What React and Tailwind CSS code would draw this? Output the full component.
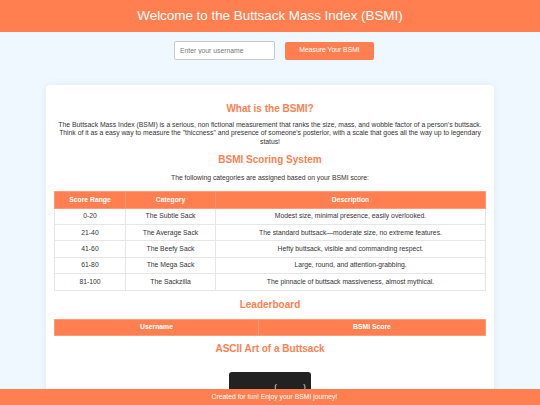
import { useState } from 'react';

const categories = [
  ['0-20', 'The Subtle Sack', 'Modest size, minimal presence, easily overlooked.'],
  ['21-40', 'The Average Sack', 'The standard buttsack\u2014moderate size, no extreme features.'],
  ['41-60', 'The Beefy Sack', 'Hefty buttsack, visible and commanding respect.'],
  ['61-80', 'The Mega Sack', 'Large, round, and attention-grabbing.'],
  ['81-100', 'The Sackzilla', 'The pinnacle of buttsack massiveness, almost mythical.'],
];

const asciiButt = `         (      )
        (        )
         \\      /
          \\____/`;

const Heading = ({ children, className = '' }) => (
  <h2 className={`text-center text-[10px] leading-[12px] font-bold text-[#ff7f50] ${className}`}>
    {children}
  </h2>
);

const App = () => {
  const [username, setUsername] = useState('');

  return (
    <div
      className="min-h-[405px] bg-[#f0f8ff] text-[#333] pb-[40px]"
      style={{ fontFamily: '"Liberation Sans", Arial, sans-serif' }}
    >
      <header className="h-[32px] bg-[#ff7f50] flex items-center justify-center">
        <h1 className="text-[13.4px] text-white">Welcome to the Buttsack Mass Index (BSMI)</h1>
      </header>

      <div className="mt-[9px] pl-[8px] flex items-center justify-center gap-[10px]">
        <input
          value={username}
          onChange={(e) => setUsername(e.target.value)}
          placeholder="Enter your username"
          className="w-[101px] h-[19px] px-[5px] text-[6.8px] border border-[#c8c8c8] rounded-[2px] bg-white placeholder:text-[#777] outline-none"
        />
        <button className="w-[89px] h-[18px] bg-[#ff7f50] text-white text-[6.8px] rounded-[2px]">
          Measure Your BSMI
        </button>
      </div>

      <main className="mt-[25px] mx-[46px] bg-white rounded-[4px] shadow-[0_0_8px_rgba(0,60,120,0.08)] px-[8px] pt-[18px] pb-[20px]">
        <Heading>What is the BSMI?</Heading>
        <p className="mt-[6px] text-center text-[6.8px] leading-[8.4px]">
          The Buttsack Mass Index (BSMI) is a serious, non fictional measurement that ranks the size, mass, and wobble
          factor of a person's buttsack. Think of it as a easy way to measure the "thiccness" and presence of someone's
          posterior, with a scale that goes all the way up to legendary status!
        </p>

        <Heading className="mt-[8px]">BSMI Scoring System</Heading>
        <p className="mt-[8px] text-center text-[6.8px] leading-[8.4px]">
          The following categories are assigned based on your BSMI score:
        </p>

        <table className="mt-[8px] w-full text-[6.8px] text-center">
          <thead>
            <tr className="h-[17px] bg-[#ff7f50] text-white font-bold">
              <th className="w-[71px] border border-[#ff9b76]">Score Range</th>
              <th className="w-[90px] border border-[#ff9b76]">Category</th>
              <th className="border border-[#ff9b76]">Description</th>
            </tr>
          </thead>
          <tbody>
            {categories.map(([range, name, desc]) => (
              <tr key={range} className="h-[16.4px]">
                <td className="border border-[#e6e6e6]">{range}</td>
                <td className="border border-[#e6e6e6]">{name}</td>
                <td className="border border-[#e6e6e6]">{desc}</td>
              </tr>
            ))}
          </tbody>
        </table>

        <Heading className="mt-[8px]">Leaderboard</Heading>
        <table className="mt-[8px] w-full text-[6.8px] text-center">
          <thead>
            <tr className="h-[16px] bg-[#ff7f50] text-white font-bold">
              <th className="w-[204px] border border-[#ff9b76]">Username</th>
              <th className="border border-[#ff9b76]">BSMI Score</th>
            </tr>
          </thead>
          <tbody />
        </table>

        <Heading className="mt-[7px]">ASCII Art of a Buttsack</Heading>
        <div className="mt-[17px] flex justify-center">
          <pre
            className="w-[82px] bg-[#222] text-white text-[6.8px] leading-[8px] rounded-[3px] px-[8px] pt-[11px] pb-[8px] overflow-hidden"
            style={{ fontFamily: '"Liberation Mono", monospace' }}
          >
            {asciiButt}
          </pre>
        </div>
      </main>

      <footer className="fixed bottom-0 left-0 right-0 h-[16px] pl-[9px] bg-[#ff7f50] text-white text-[6.8px] flex items-center justify-center">
        Created for fun! Enjoy your BSMI journey!
      </footer>
    </div>
  );
};

export default App;
